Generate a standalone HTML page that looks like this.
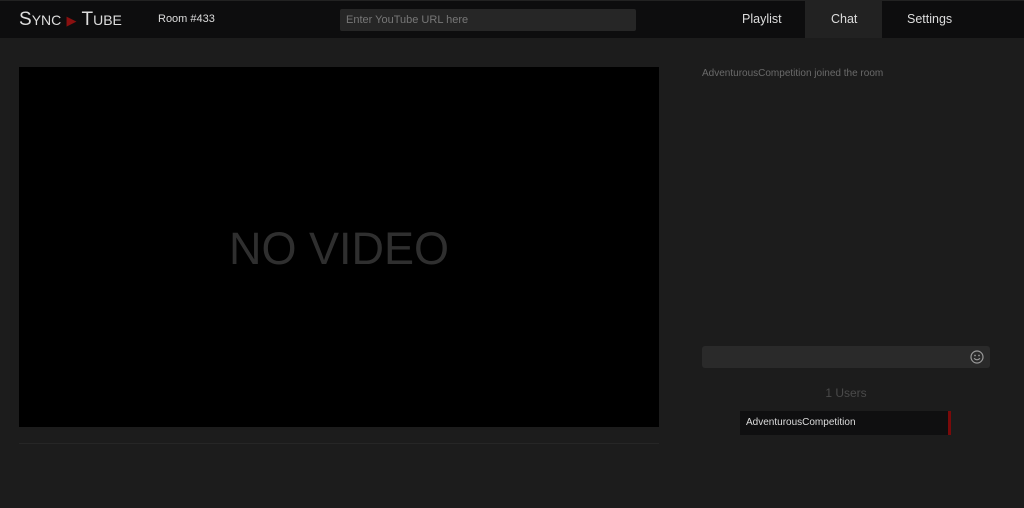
<!DOCTYPE html>
<html><head><style>
body{margin:0;width:1024px;height:508px;background:#1c1c1c;font-family:"Liberation Sans",sans-serif;overflow:hidden;position:relative}
.top{position:absolute;left:0;top:0;width:1024px;height:37px;background:#0d0d0e;border-top:1px solid #222}
.logo{position:absolute;left:19px;top:8px;color:#ddd;font-size:19px;letter-spacing:0}
.room{position:absolute;left:158px;top:12px;color:#ddd;font-size:11px}
.url{position:absolute;left:340px;top:8px;width:296px;height:22px;background:#262626;border-radius:2px;color:#777;font-size:11px;line-height:22px;padding-left:6px;box-sizing:border-box}
.nav{position:absolute;top:11px;color:#ddd;font-size:12.5px}
.chat{position:absolute;left:805px;top:0;width:77px;height:37px;background:#222}
.video{position:absolute;left:19px;top:67px;width:640px;height:360px;background:#000}
.nv{position:absolute;left:0;right:0;top:156px;text-align:center;color:#2f2f2f;font-size:45px}
.line{position:absolute;left:19px;top:443px;width:640px;height:1px;background:#262626}
.msg{position:absolute;left:702px;top:68px;color:#6a6a6a;font-size:10px}
.inp{position:absolute;left:702px;top:346px;width:288px;height:22px;background:#2a2a2a;border-radius:3px}
.users{position:absolute;left:702px;width:288px;top:386px;text-align:center;color:#4a4a4a;font-size:12px}
.user{position:absolute;left:740px;top:411px;height:24px;background:#0f0f10;border-right:3px solid #7a0a0a;color:#ddd;font-size:10px;line-height:24px;padding-left:6px;box-sizing:border-box;width:211px}
</style></head><body>
<div class="top">
<div class="logo">S<span style="font-size:14px">YNC</span> <span style="color:#8a1010;font-size:13px">▶</span> T<span style="font-size:14px">UBE</span></div>
<div class="room">Room #433</div>
<div class="url">Enter YouTube URL here</div>
<div class="chat"></div>
<div class="nav" style="left:742px">Playlist</div>
<div class="nav" style="left:831px">Chat</div>
<div class="nav" style="left:907px">Settings</div>
</div>
<div class="video"><div class="nv">NO VIDEO</div></div>
<div class="line"></div>
<div class="msg">AdventurousCompetition joined the room</div>
<div class="inp"><svg style="position:absolute;left:268px;top:4px" width="14" height="14" viewBox="0 0 14 14"><circle cx="7" cy="7" r="6" fill="none" stroke="#999" stroke-width="1.2"/><circle cx="5" cy="5.5" r=".9" fill="#999"/><circle cx="9" cy="5.5" r=".9" fill="#999"/><path d="M4 8.3Q7 11.3 10 8.3" fill="none" stroke="#999" stroke-width="1.1"/></svg></div>
<div class="users">1 Users</div>
<div class="user">AdventurousCompetition</div>
</body></html>
